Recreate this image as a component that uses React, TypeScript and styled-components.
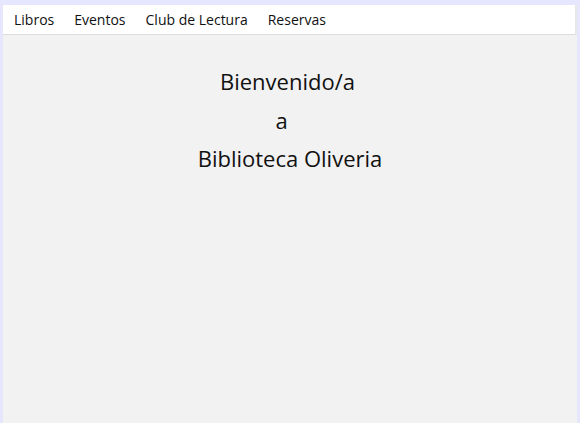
import React from "react";
import styled, { createGlobalStyle } from "styled-components";

const GlobalStyle = createGlobalStyle`
    html, body {
        margin: 0;
        height: 100%;
    }
    body {
        background-color: #e6e6ff;
        font-family: "Open Sans", "Noto Sans", sans-serif;
        color: #111;
    }
    #root {
        height: 100%;
    }
`;

const Page = styled.div`
    display: flex;
    flex-direction: column;
    height: 100%;
    padding: 5px 3px 0 3px;
    box-sizing: border-box;
`;

const NavBar = styled.nav`
    display: flex;
    gap: 20px;
    align-items: center;
    height: 29px;
    padding: 0 11px;
    background: #fff;
    border-bottom: 1px solid #dcdcdc;
    border-right: 2px solid #e8e8e8;
`;

const NavItem = styled.a`
    font-size: 14px;
    color: #111;
    text-decoration: none;
    cursor: pointer;
`;

const Main = styled.main`
    flex: 1;
    background-color: #f2f2f2;
    display: flex;
    flex-direction: column;
    align-items: center;
    padding-top: 27px;
`;

const Line = styled.h1<{ $shift?: number }>`
    margin: 0;
    font-size: 22px;
    font-weight: 400;
    line-height: 38.5px;
    padding-right: ${(p) => p.$shift ?? 0}px;
`;

const App: React.FC = () => {
  const links = ["Libros", "Eventos", "Club de Lectura", "Reservas"];

  return (
    <>
      <GlobalStyle />
      <Page>
        <NavBar>
          {links.map((l) => (
            <NavItem key={l}>{l}</NavItem>
          ))}
        </NavBar>
        <Main>
          <Line $shift={5}>Bienvenido/a</Line>
          <Line $shift={17}>a</Line>
          <Line>Biblioteca Oliveria</Line>
        </Main>
      </Page>
    </>
  );
};

export default App;
